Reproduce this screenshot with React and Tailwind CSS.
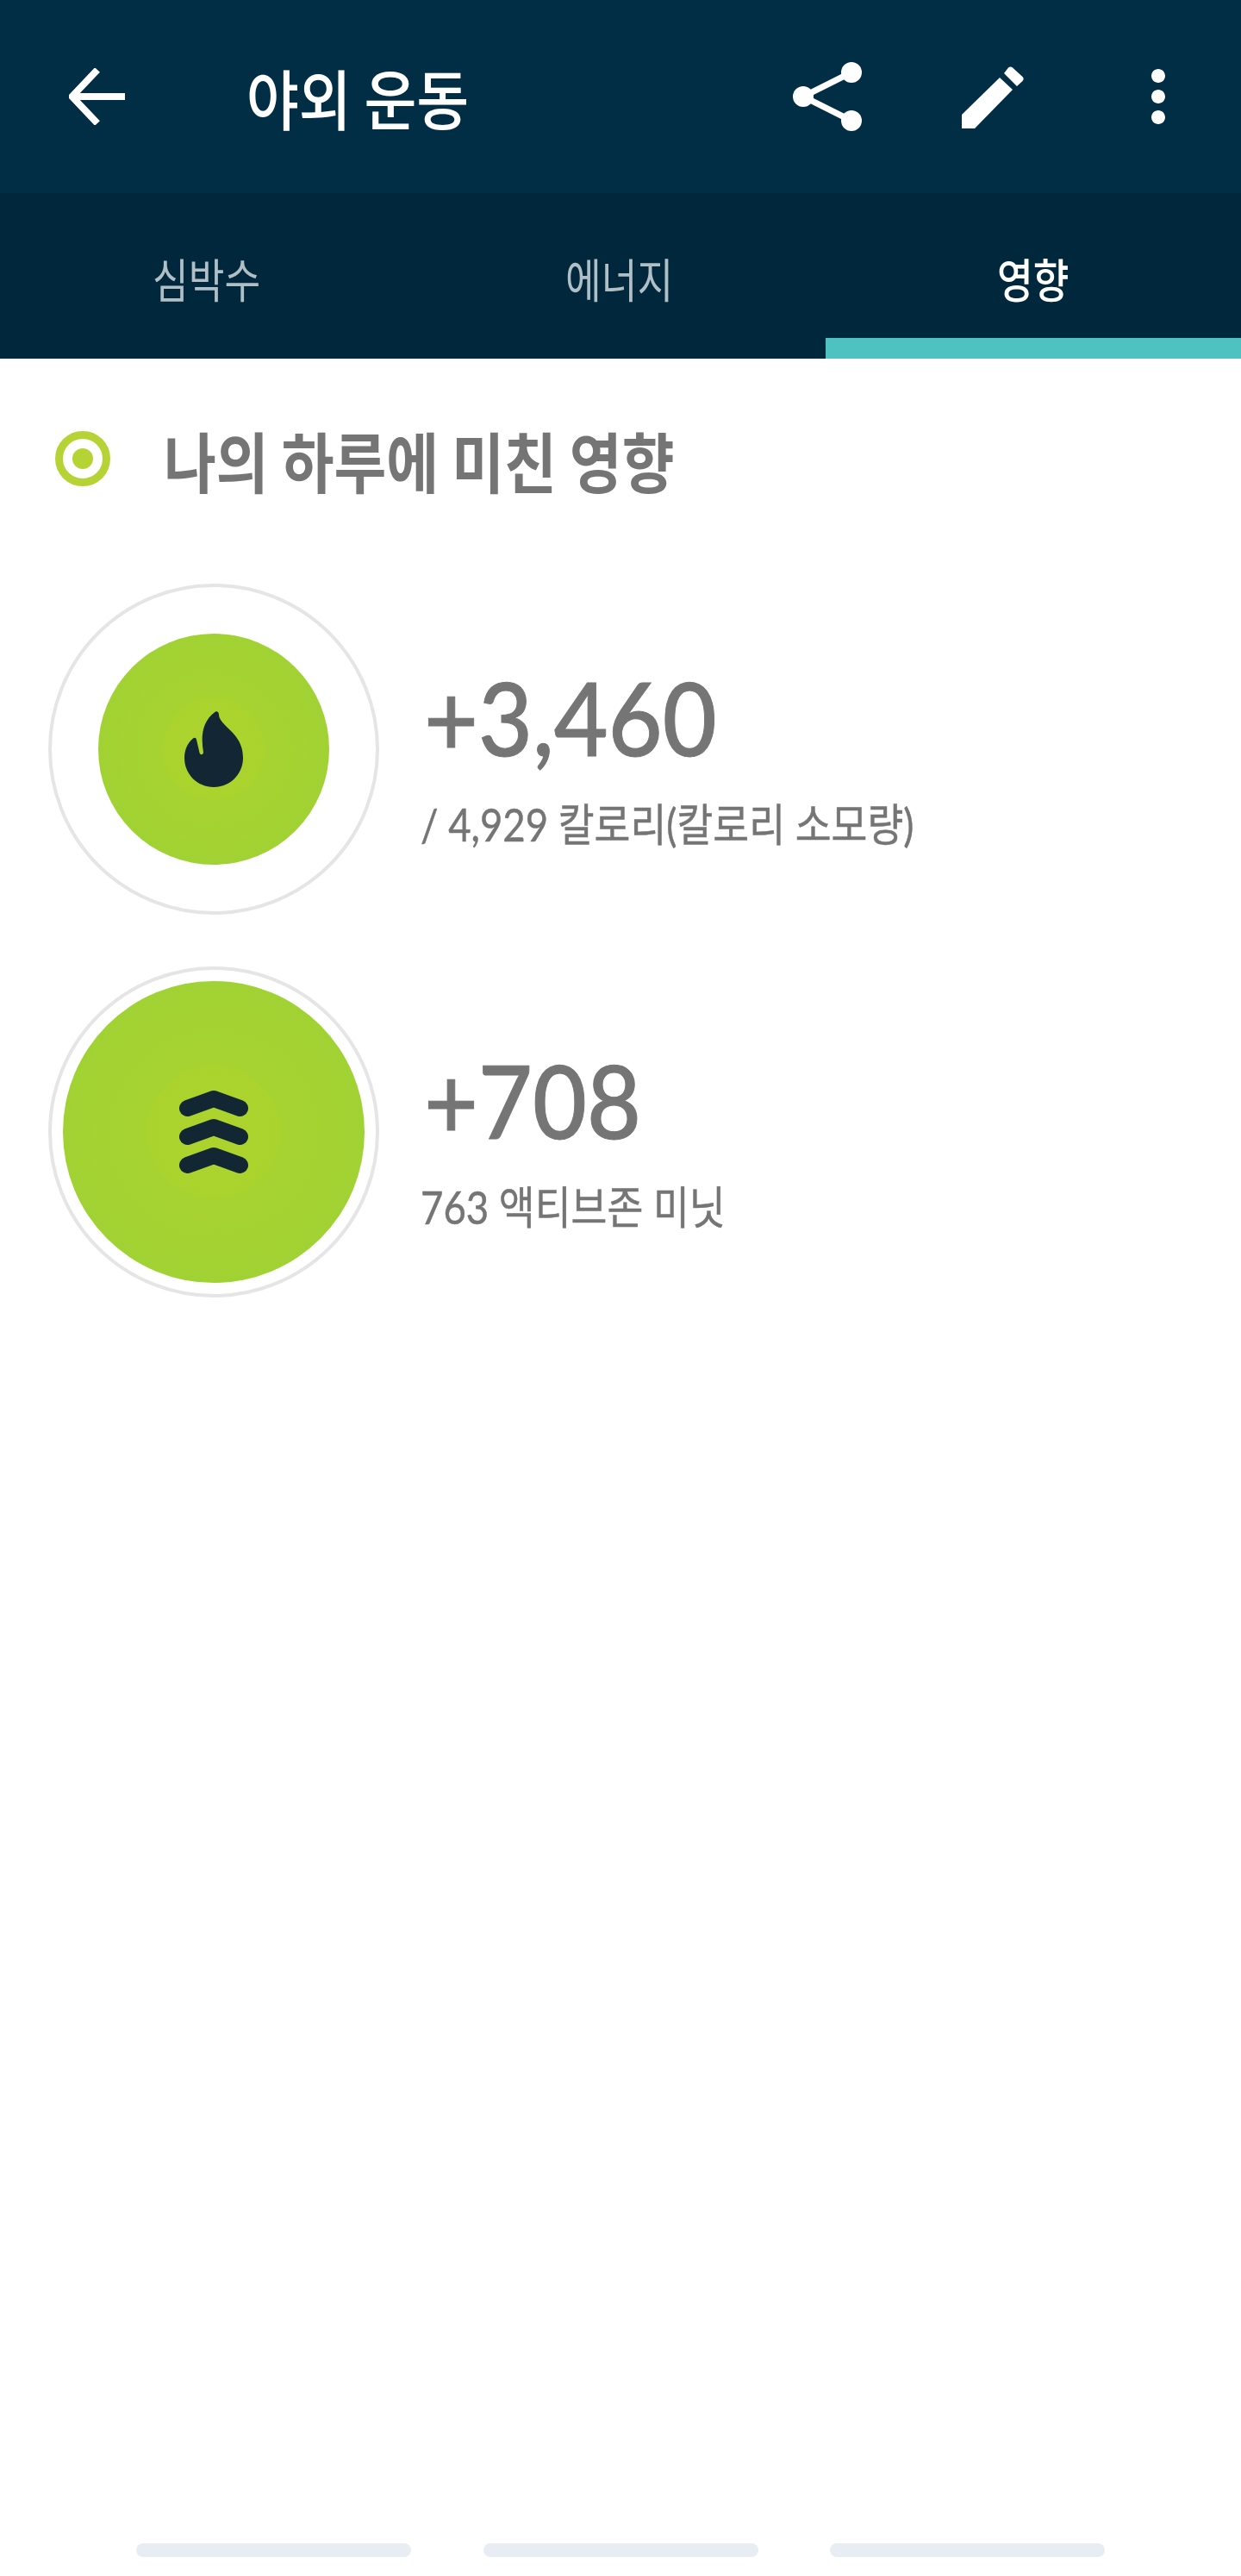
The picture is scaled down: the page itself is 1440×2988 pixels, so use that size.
import React from 'react';

const krFont = "font-['Noto_Sans_CJK_KR',sans-serif]";

const ArrowBack = () => (
  <svg width="66" height="66" viewBox="0 0 66 66" fill="none" stroke="white" strokeWidth="8" className="block">
    <path d="M65 33H6M33 2 3.500 33 33 64" />
  </svg>
);

const ShareIcon = () => (
  <svg width="80" height="80" viewBox="0 0 80 80" fill="white" stroke="white" className="block">
    <path d="M68 12 12 40 68 68" fill="none" strokeWidth="7" />
    <circle cx="68" cy="12" r="12" stroke="none" />
    <circle cx="12" cy="40" r="12" stroke="none" />
    <circle cx="68" cy="68" r="12" stroke="none" />
  </svg>
);

const EditIcon = () => (
  <svg width="72" height="73" viewBox="0 0 72 73" fill="white" className="block">
    <path d="M44 14 59 28 15 73H0V57Z" />
    <path d="M54 2.500c1.500-1.500 3.500-1.500 5 0l11.500 10.500c1.500 1.500 1.500 3.500 0 5L64 24 49 9Z" />
  </svg>
);

const MoreIcon = () => (
  <svg width="96" height="96" viewBox="0 0 24 24" fill="white" className="block">
    <path d="M12 8c1.100 0 2-.9 2-2s-.9-2-2-2-2 .9-2 2 .9 2 2 2zm0 2c-1.100 0-2 .9-2 2s.9 2 2 2 2-.9 2-2-.9-2-2-2zm0 6c-1.100 0-2 .9-2 2s.9 2 2 2 2-.9 2-2-.9-2-2-2z" />
  </svg>
);

const FlameIcon = () => (
  <svg width="68" height="88" viewBox="0 0 68 88" fill="#122733" className="block">
    <path d="M36 .5C38-.5 40 1 40 4c0 4 3 8 7 12 9 9 21 18 21 38 0 19-15 34-34 34S0 73 0 54c0-9 4-18 10-22.500 2-1.500 3.500-.5 4 1.500l3.500 15c.5 3 4.500 3 4.500-.5C19 30 20 12 36 .5Z" />
  </svg>
);

const ZonesIcon = () => (
  <svg width="80" height="96" viewBox="0 0 80 96" fill="none" stroke="#122733" strokeWidth="19" strokeLinecap="round" strokeLinejoin="round" className="block">
    <path d="M9.500 20.500 40 9.500 70.500 20.500" />
    <path d="M9.500 53.500 40 42.500 70.500 53.500" />
    <path d="M9.500 86.500 40 75.500 70.500 86.500" />
  </svg>
);

const stats = [
  {
    value: '+3,460',
    label: '/ 4,929 칼로리(칼로리 소모량)',
    inner: 'w-[268px] h-[268px] bg-[radial-gradient(closest-side,#acd32d_0%,#abd32e_44%,#a7d331_44%,#a1d233_100%)]',
    icon: <FlameIcon />,
  },
  {
    value: '+708',
    label: '763 액티브존 미닛',
    inner: 'w-[350px] h-[350px] bg-[radial-gradient(closest-side,#acd32d_0%,#abd32e_44%,#a7d331_44%,#a1d233_100%)]',
    icon: <ZonesIcon />,
  },
];

const tabs = ['심박수', '에너지', '영향'];

export default function App() {
  return (
    <div className={`min-h-[2988px] flex flex-col bg-white ${krFont}`}>
      <header className="h-[224px] bg-[#012d45] flex items-center">
        <div className="ml-[80px] w-[206px]">
          <ArrowBack />
        </div>
        <h1 className="text-[76px] leading-none font-medium text-white origin-left scale-x-[0.87] whitespace-nowrap">야외 운동</h1>
        <div className="ml-auto flex items-center">
          <ShareIcon />
          <div className="ml-[116px]"><EditIcon /></div>
          <div className="ml-[108px] mr-[48px]"><MoreIcon /></div>
        </div>
      </header>

      <nav className="grid grid-cols-[479px_479px_482px] h-[192px] bg-[#00273c]">
        {tabs.map((tab, i) => (
          <div
            key={tab}
            className={`relative flex items-center justify-center pt-[6px] text-[54px] leading-none ${
              i === 2 ? 'text-white font-medium' : 'text-[#b0bec5]'
            }`}
          >
            <span className="scale-x-[0.84] whitespace-nowrap">{tab}</span>
            {i === 2 && <div className="absolute left-0 right-0 bottom-0 h-[24px] bg-[#4dc2c0]" />}
          </div>
        ))}
      </nav>

      <section className="flex items-center h-[232px] pl-[64px] shrink-0">
        <div className="w-[64px] h-[64px] rounded-full border-[9px] border-[#b5d334] flex items-center justify-center">
          <div className="w-[24px] h-[24px] rounded-full bg-[#b5d334]" />
        </div>
        <h2 className="ml-[62px] mt-[2px] text-[76px] leading-none font-bold text-[#757575] origin-left scale-x-[0.87] whitespace-nowrap">나의 하루에 미친 영향</h2>
      </section>

      <div className="mt-[29px] pl-[56px] flex flex-col gap-[60px]">
        {stats.map((stat) => (
          <div key={stat.value} className="flex items-center">
            <div className="w-[384px] h-[384px] rounded-full border-4 border-[#e5e5e5] flex items-center justify-center shrink-0">
              <div className={`${stat.inner} rounded-full flex items-center justify-center`}>
                {stat.icon}
              </div>
            </div>
            <div className="ml-[48px] pt-[20px] text-[#757575]">
              <div className="ml-[4px] font-['Lato','Noto_Sans_CJK_KR',sans-serif] font-medium [-webkit-text-stroke:1px_#757575] text-[118px] leading-[120px] origin-left scale-x-[0.92] whitespace-nowrap">{stat.value}</div>
              <div className="mt-[34px] font-['Lato','Noto_Sans_CJK_KR',sans-serif] [-webkit-text-stroke:0.5px_#757575] text-[52px] leading-[60px] origin-left scale-x-[0.875] whitespace-nowrap">{stat.label}</div>
            </div>
          </div>
        ))}
      </div>

      <div className="mt-auto mb-[22px] flex justify-between pl-[158px] pr-[158px]">
        <div className="w-[319px] h-[16px] rounded-full bg-[#e8edf3]" />
        <div className="w-[319px] h-[16px] rounded-full bg-[#e8edf3]" />
        <div className="w-[319px] h-[16px] rounded-full bg-[#e8edf3]" />
      </div>
    </div>
  );
}
